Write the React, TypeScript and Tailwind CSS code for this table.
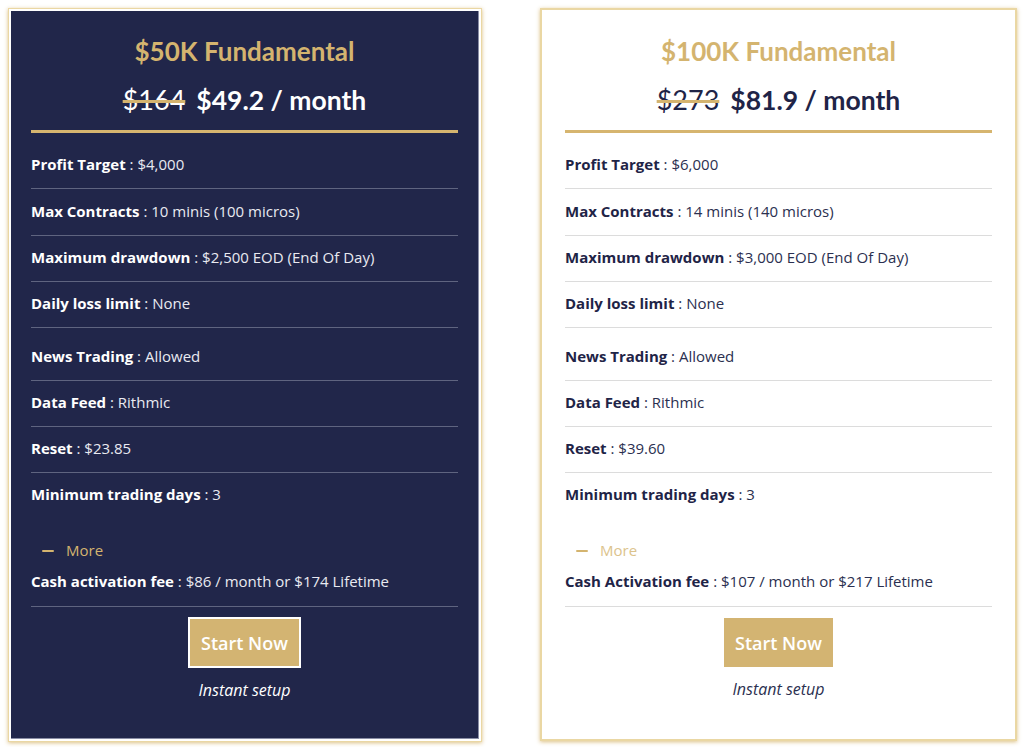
import React from 'react';

type Row = { label: string; value: string; extra?: string };

const plans = [
  {
    title: '$50K Fundamental',
    oldPrice: '$164',
    price: '$49.2 / month',
    rows: [
      { label: 'Profit Target', value: '$4,000', extra: 'pt-[21px]' },
      { label: 'Max Contracts', value: '10 minis (100 micros)', extra: 'pt-[12px]' },
      { label: 'Maximum drawdown', value: '$2,500 EOD (End Of Day)' },
      { label: 'Daily loss limit', value: 'None' },
      { label: 'News Trading', value: 'Allowed', extra: 'pt-[18px]' },
      { label: 'Data Feed', value: 'Rithmic' },
      { label: 'Reset', value: '$23.85' },
    ] as Row[],
    lastRow: { label: 'Minimum trading days', value: '3' },
    cash: { label: 'Cash activation fee', value: '$86 / month or $174 Lifetime' },
    dark: true,
  },
  {
    title: '$100K Fundamental',
    oldPrice: '$273',
    price: '$81.9 / month',
    rows: [
      { label: 'Profit Target', value: '$6,000', extra: 'pt-[21px]' },
      { label: 'Max Contracts', value: '14 minis (140 micros)', extra: 'pt-[12px]' },
      { label: 'Maximum drawdown', value: '$3,000 EOD (End Of Day)' },
      { label: 'Daily loss limit', value: 'None' },
      { label: 'News Trading', value: 'Allowed', extra: 'pt-[18px]' },
      { label: 'Data Feed', value: 'Rithmic' },
      { label: 'Reset', value: '$39.60' },
    ] as Row[],
    lastRow: { label: 'Minimum trading days', value: '3' },
    cash: { label: 'Cash Activation fee', value: '$107 / month or $217 Lifetime' },
    dark: false,
  },
];

function PlanCard({ plan }: { plan: (typeof plans)[number] }) {
  const dark = plan.dark;
  const labelCls = dark ? 'font-bold text-white' : 'font-bold text-[#1f2447]';
  const valueCls = dark ? 'text-[#e9eaf1]' : 'text-[#2b3050]';
  const lineCls = dark ? 'border-[#5f6480]' : 'border-[#dcdcdc]';

  const body = (
    <div className="flex flex-col h-full">
      {/* heading */}
      <div className="pt-[22px] text-center font-['Lato',sans-serif]">
        <h2 className="text-[26px] leading-[36px] font-bold text-[#d4b46f]">{plan.title}</h2>
        <div
          className={`mt-[13px] leading-[36px] flex justify-center items-baseline gap-[11px] ${
            dark ? 'text-white' : 'text-[#1f2447]'
          }`}
        >
          <span className="text-[27px] font-normal line-through decoration-[#d4b46f] decoration-[3px]">
            {plan.oldPrice}
          </span>
          <span className="text-[26.5px] font-bold">{plan.price}</span>
        </div>
        <div className="mt-[12px] h-[3px] bg-[#d6b56f]" />
      </div>

      {/* feature list */}
      <div className="font-['Open_Sans',sans-serif] text-[15px] leading-[21px]">
        {plan.rows.map((r) => (
          <div key={r.label} className={`border-b ${lineCls} ${r.extra ?? 'pt-[11px]'} pb-[13px]`}>
            <span className={labelCls}>{r.label}</span>
            <span className={valueCls}> : {r.value}</span>
          </div>
        ))}
        <div className="pt-[11px]">
          <span className={labelCls}>{plan.lastRow.label}</span>
          <span className={valueCls}> : {plan.lastRow.value}</span>
        </div>

        <div className="mt-[35px] flex items-center pl-[11px] text-[#d4b46f]">
          <span className="w-[12px] h-[2px] bg-[#d4b46f] rounded-sm" />
          <span className={`ml-[12px] ${dark ? 'text-[#d4b46f]' : 'text-[#dcc38c]'}`}>More</span>
        </div>

        <div className={`mt-[10px] pb-[14px] border-b ${lineCls}`}>
          <span className={labelCls}>{plan.cash.label}</span>
          <span className={valueCls}> : {plan.cash.value}</span>
        </div>

        <div className="flex flex-col items-center">
          <button
            className={`bg-[#d3b472] text-white text-[18px] font-semibold leading-none ${
              dark ? 'mt-[10px] border-2 border-white h-[51px] px-[11px]' : 'mt-[11px] h-[49px] px-[11px]'
            }`}
          >
            Start Now
          </button>
          <p className={`mt-[12px] text-[16px] italic ${dark ? 'text-white' : 'text-[#2b3050]'}`}>
            Instant setup
          </p>
        </div>
      </div>
    </div>
  );

  if (dark) {
    return (
      <div className="w-[474px] h-[734px] bg-white border border-[#ead7a3] shadow-[0_1px_4px_rgba(214,181,111,0.85)] p-[2px]">
        <div className="h-full bg-[#21264a] border-r border-b border-[#8a8ea6] px-[20px]">{body}</div>
      </div>
    );
  }
  return (
    <div className="w-[477px] h-[733px] bg-white border-2 border-[#ead7a3] shadow-[0_1px_4px_rgba(214,181,111,0.85)] px-[23px] pt-[1px]">
      {body}
    </div>
  );
}

export default function App() {
  return (
    <div className="w-[1024px] h-[747px] bg-white flex gap-[58px] pl-[8px] pt-[8px]">
      {plans.map((p) => (
        <PlanCard key={p.title} plan={p} />
      ))}
    </div>
  );
}
